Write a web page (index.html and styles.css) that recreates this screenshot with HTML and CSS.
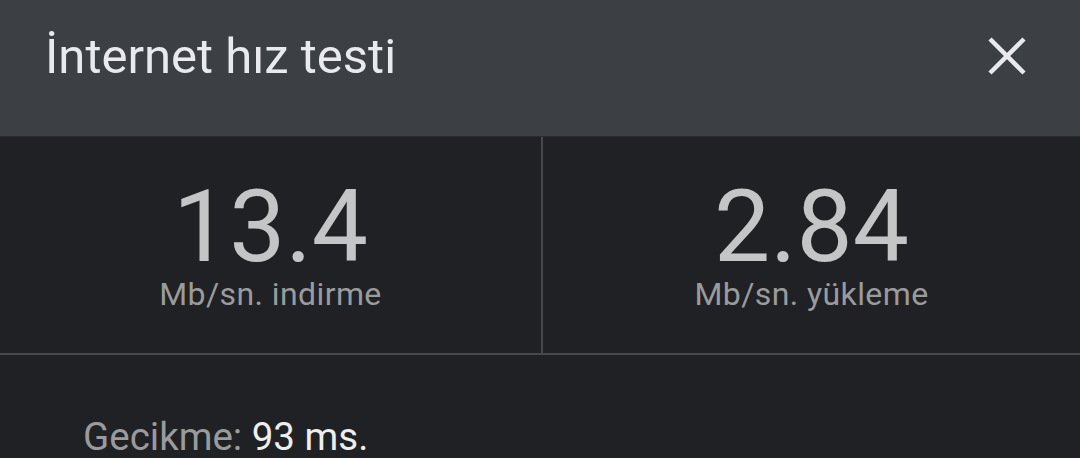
FILE: index.html
```html
<!DOCTYPE html>
<html lang="tr">
<head>
  <meta charset="UTF-8">
  <meta name="viewport" content="width=device-width, initial-scale=1.0">
  <title>İnternet hız testi</title>
  <link rel="stylesheet" href="styles.css">
</head>
<body>
  <div class="header">
    <h1 class="title">İnternet hız testi</h1>
    <button class="close" aria-label="Kapat">
      <svg width="38" height="38" viewBox="0 0 38 38">
        <path d="M2 2 L36 36 M36 2 L2 36" stroke="#e8eaed" stroke-width="4.5" fill="none"/>
      </svg>
    </button>
  </div>

  <!-- Speed results -->
  <div class="stats">
    <div class="stat">
      <div class="value">13.4</div>
      <div class="unit">Mb/sn. indirme</div>
    </div>
    <div class="stat">
      <div class="value">2.84</div>
      <div class="unit">Mb/sn. yükleme</div>
    </div>
  </div>

  <div class="latency">
    <span class="latency-label">Gecikme:</span> <span class="latency-value">93 ms.</span>
  </div>
</body>
</html>
```

FILE: styles.css
```css
body {
  margin: 0;
  background-color: #202124;
  font-family: Roboto, "Noto Sans", sans-serif;
  overflow: hidden;
}

.header {
  display: flex;
  align-items: center;
  justify-content: space-between;
  height: 137px;
  padding: 0 54px 0 45px;
  background-color: #3c3f43;
  border-bottom: 1px solid #2a2b2e;
  box-sizing: border-box;
}

.title {
  margin: 0;
  font-size: 49px;
  font-weight: 400;
  color: #e8eaed;
  padding-bottom: 24px;
}

.close {
  background: none;
  border: none;
  padding: 0;
  margin-bottom: 24px;
  display: flex;
  cursor: pointer;
}

.stats {
  display: grid;
  grid-template-columns: 541px 1fr;
  height: 216px;
  border-bottom: 2px solid #48494c;
}

.stat {
  display: flex;
  flex-direction: column;
  align-items: center;
  padding-top: 40px;
}

.stat + .stat {
  border-left: 2px solid #48494c;
}

.value {
  font-size: 100px;
  font-weight: 400;
  line-height: 100px;
  color: #c4c5c6;
}

.unit {
  font-size: 32px;
  letter-spacing: 0.4px;
  line-height: 32px;
  color: #9a9b9d;
  margin-top: 1px;
}

.latency {
  padding: 63px 0 0 83px;
  font-size: 38.5px;
  line-height: 1;
}

.latency-label {
  color: #9a9b9d;
}

.latency-value {
  color: #eeeeee;
}
```
